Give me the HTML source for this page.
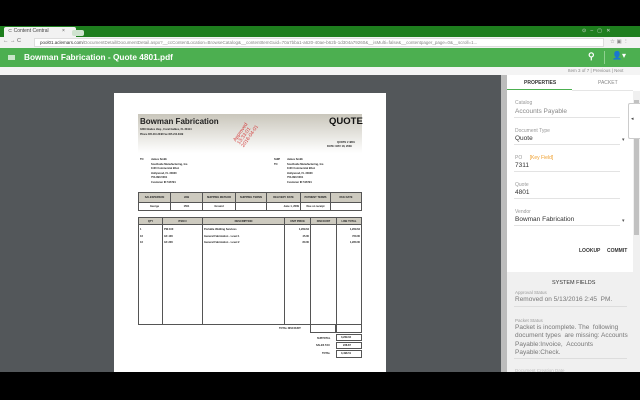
<!DOCTYPE html>
<html><head><meta charset="utf-8"><style>
*{margin:0;padding:0;box-sizing:border-box}
body{width:640px;height:400px;background:#000;position:relative;overflow:hidden;font-family:"Liberation Sans",sans-serif}
.a{position:absolute}
.t{position:absolute;white-space:nowrap}
.doc{font-size:3px;color:#222;font-weight:bold}
table{border-collapse:collapse;position:absolute}
td{border:0.6px solid #555;font-size:2.6px;font-weight:bold;text-align:center;padding:0 1px;color:#222}
.lbl{font-size:5px;color:#999}
.val{font-size:6.5px;color:#333}
.ln{height:1px;background:#e3e3e3;width:106px;left:514px}
</style></head><body>
<!-- chrome tabs -->
<div class="a" style="left:0;top:26px;width:640px;height:11px;background:#1e7e1e"></div>
<div class="a" style="left:4px;top:27px;width:72px;height:10px;background:#f2f2f2;border-radius:2px 2px 0 0"></div>
<div class="t" style="left:8px;top:28px;font-size:5px;color:#444">⊂ Content Central</div>
<div class="t" style="left:62px;top:28px;font-size:5px;color:#555">×</div>
<div class="a" style="left:72px;top:30px;width:12px;height:6px;background:#cfe3cf;border-radius:2px"></div>
<div class="t" style="left:582px;top:28px;font-size:5px;color:#ddd">⊙ &nbsp; – &nbsp; ▢ &nbsp; ✕</div>
<!-- address -->
<div class="a" style="left:0;top:37px;width:640px;height:11px;background:#f2f2f2"></div>
<div class="t" style="left:3px;top:38px;font-size:5.5px;color:#666">← → C</div>
<div class="a" style="left:34px;top:38px;width:570px;height:9px;background:#fff;border:1px solid #ddd"></div>
<div class="t" style="left:40px;top:39.5px;font-size:4.5px;color:#888"><span style="color:#333">pool01.aclemars.com</span>/DocumentDetail/DocumentDetail.aspx?__ccContentLocation=BrowseCatalog&amp;__contentItemGuid=70a7bba1-a620-40ae-b62b-1d304a79260&amp;__isMulti=false&amp;__contentpager_page=0&amp;__scroll=1...</div>
<div class="t" style="left:610px;top:38.5px;font-size:5.5px;color:#888">☆ ▣ ⋮</div>
<!-- app header -->
<div class="a" style="left:0;top:48px;width:640px;height:19px;background:#4caf50"></div>
<div class="a" style="left:8px;top:55px;width:7px;height:5px;background:#c8e6c9"></div>
<div class="t" style="left:24px;top:52px;font-size:8.3px;font-weight:bold;color:#fff">Bowman Fabrication - Quote 4801.pdf</div>
<div class="t" style="left:588px;top:51px;font-size:9px;color:#fff;font-weight:bold">⚲</div>
<div class="a" style="left:604px;top:51px;width:1px;height:13px;background:#8fd18f"></div>
<div class="t" style="left:612px;top:51px;font-size:8px;color:#fff">👤▾</div>
<!-- sub bar -->
<div class="a" style="left:0;top:67px;width:640px;height:8px;background:#f4f4f4"></div>
<div class="t" style="left:568px;top:67.5px;font-size:4.5px;color:#888">Item 3 of 7 | Previous | Next</div>
<!-- viewer -->
<div class="a" style="left:0;top:75px;width:501px;height:297px;background:#53575a"></div>
<div class="a" style="left:114px;top:93px;width:272px;height:279px;background:#fff"></div>
<!-- doc header -->
<div class="a" style="left:138px;top:114px;width:224px;height:39px;background:linear-gradient(#c9c6bb,#fff)"></div>
<div class="t" style="left:140px;top:117px;font-size:8px;font-weight:bold;color:#222">Bowman Fabrication</div>
<div class="t doc" style="left:140px;top:128px;font-size:2.6px">3330 Glades Hwy., Coral Gables, FL 33114</div>
<div class="t doc" style="left:140px;top:133px;font-size:2.4px">Phone 305-210-3348 Fax 305-210-3349</div>
<div class="t" style="left:329px;top:116px;font-size:9.5px;font-weight:bold;color:#111">QUOTE</div>
<div class="t doc" style="left:337px;top:141px;font-size:2.6px">QUOTE # 4801</div>
<div class="t doc" style="left:327px;top:145px;font-size:2.6px">DATE: MAY 18, 2009</div>
<div class="t" style="left:233px;font-size:5px;color:#d43a3a;transform:rotate(-55deg);transform-origin:left top;line-height:5px;top:140px">Approved<br>13:33:01<br>2016-04-01</div>
<div class="t doc" style="left:140px;top:158px;font-size:2.6px;line-height:4.6px;font-weight:bold">TO</div>
<div class="t doc" style="left:151px;top:158px;font-size:2.6px;line-height:4.6px">James Smith<br>Southside Manufacturing, Inc.<br>1100 Commercial Blvd.<br>Hollywood, FL 33020<br>754-890-5001<br>Customer ID 516791</div>
<div class="t doc" style="left:274px;top:158px;font-size:2.6px;line-height:4.6px">SHIP<br>TO</div>
<div class="t doc" style="left:287px;top:158px;font-size:2.6px;line-height:4.6px">James Smith<br>Southside Manufacturing, Inc.<br>1100 Commercial Blvd.<br>Hollywood, FL 33020<br>754-890-5001<br>Customer ID 516791</div>
<table style="left:138px;top:192px;width:224px;height:19px">
<tr style="background:#cdcabf;height:10px"><td style="width:32px">SALESPERSON</td><td style="width:32px">JOB</td><td style="width:33px">SHIPPING METHOD</td><td style="width:31px">SHIPPING TERMS</td><td style="width:34px">DELIVERY DATE</td><td style="width:30px">PAYMENT TERMS</td><td>DUE DATE</td></tr>
<tr><td>George</td><td>1501</td><td>Ground</td><td></td><td style="text-align:right">June 1, 2009</td><td>Due on receipt</td><td></td></tr>
</table>
<table style="left:138px;top:217px;width:224px;height:108px">
<tr style="background:#cdcabf;height:7px"><td style="width:24px">QTY</td><td style="width:40px">ITEM #</td><td style="width:82px">DESCRIPTION</td><td style="width:26px">UNIT PRICE</td><td style="width:26px">DISCOUNT</td><td>LINE TOTAL</td></tr>
<tr><td style="text-align:left;vertical-align:top;line-height:6.5px;padding-top:2px">1<br>16<br>16</td><td style="text-align:left;vertical-align:top;line-height:6.5px;padding-top:2px">PW-100<br>GF-100<br>GF-200</td><td style="text-align:left;vertical-align:top;line-height:6.5px;padding-top:2px">Portable Welding Services<br>General Fabrication - Level 1<br>General Fabrication - Level 2</td><td style="text-align:right;vertical-align:top;line-height:6.5px;padding-top:2px">1,269.64<br>45.00<br>80.00</td><td></td><td style="text-align:right;vertical-align:top;line-height:6.5px;padding-top:2px">1,269.64<br>720.00<br>1,280.00</td></tr>
</table>
<div class="t doc" style="left:279px;top:327px;font-size:2.5px">TOTAL DISCOUNT</div>
<div class="a" style="left:310px;top:325px;width:26px;height:8px;border:0.6px solid #555;border-top:none"></div>
<div class="a" style="left:336px;top:325px;width:26px;height:8px;border:0.6px solid #555;border-top:none"></div>
<div class="t doc" style="left:317px;top:337px;font-size:2.5px">SUBTOTAL</div>
<div class="a" style="left:336px;top:334px;width:26px;height:7px;border:0.6px solid #555"></div>
<div class="t doc" style="left:341px;top:336px;font-size:2.6px">3,269.64</div>
<div class="t doc" style="left:316px;top:344px;font-size:2.5px">SALES TAX</div>
<div class="a" style="left:336px;top:342px;width:26px;height:7px;border:0.6px solid #555"></div>
<div class="t doc" style="left:343px;top:344px;font-size:2.6px">228.87</div>
<div class="t doc" style="left:322px;top:352px;font-size:2.5px">TOTAL</div>
<div class="a" style="left:336px;top:350px;width:26px;height:8px;border:0.6px solid #555"></div>
<div class="t doc" style="left:341px;top:352px;font-size:2.6px">3,498.51</div>
<!-- right panel -->
<div class="a" style="left:501px;top:75px;width:6px;height:297px;background:#bcbcbc"></div>
<div class="a" style="left:507px;top:75px;width:133px;height:297px;background:#fff"></div>
<div class="a" style="left:633px;top:91px;width:7px;height:281px;background:#f0f0f0"></div>
<div class="a" style="left:634px;top:100px;width:5px;height:135px;background:#c1c1c1"></div>
<div class="t" style="left:524px;top:80px;font-size:5px;font-weight:bold;color:#333">PROPERTIES</div>
<div class="t" style="left:598px;top:80px;font-size:5px;color:#888">PACKET</div>
<div class="a" style="left:507px;top:89px;width:65px;height:1px;background:#4caf50"></div>
<div class="a" style="left:572px;top:89.5px;width:61px;height:0.5px;background:#e5e5e5"></div>
<div class="t lbl" style="left:515px;top:100px">Catalog</div>
<div class="t val" style="left:515px;top:108px;color:#888">Accounts Payable</div>
<div class="ln a" style="top:117px"></div>
<div class="t lbl" style="left:515px;top:128px">Document Type</div>
<div class="t val" style="left:515px;top:135px">Quote</div>
<div class="t" style="left:622px;top:137px;font-size:5px;color:#555">▾</div>
<div class="ln a" style="top:144px"></div>
<div class="t lbl" style="left:515px;top:155px">PO <span style="color:#f0a030;margin-left:6px">[Key Field]</span></div>
<div class="t val" style="left:515px;top:162px">7311</div>
<div class="ln a" style="top:171px"></div>
<div class="t lbl" style="left:515px;top:182px">Quote</div>
<div class="t val" style="left:515px;top:189px">4801</div>
<div class="ln a" style="top:198px"></div>
<div class="t lbl" style="left:515px;top:209px">Vendor</div>
<div class="t val" style="left:515px;top:216px">Bowman Fabrication</div>
<div class="t" style="left:622px;top:218px;font-size:5px;color:#555">▾</div>
<div class="ln a" style="top:225px"></div>
<div class="t" style="left:579px;top:248px;font-size:5px;font-weight:bold;color:#333">LOOKUP</div>
<div class="t" style="left:607px;top:248px;font-size:5px;font-weight:bold;color:#333">COMMIT</div>
<div class="a" style="left:507px;top:272px;width:126px;height:100px;background:#f0f0f0"></div>
<div class="t" style="left:552px;top:280px;font-size:5.5px;color:#333">SYSTEM FIELDS</div>
<div class="t lbl" style="left:515px;top:290px;font-size:4.5px">Approval Status</div>
<div class="t" style="left:515px;top:296px;font-size:6.5px;color:#777">Removed on 5/13/2016 2:45 &nbsp;PM.</div>
<div class="a" style="left:514px;top:306px;width:113px;height:1px;background:#ddd"></div>
<div class="t lbl" style="left:515px;top:318px;font-size:4.5px">Packet Status</div>
<div class="t" style="left:515px;top:324px;font-size:6.5px;color:#777;line-height:8.3px">Packet is incomplete. The &nbsp;following<br>document types &nbsp;are missing: Accounts<br>Payable:Invoice, &nbsp;Accounts<br>Payable:Check.</div>
<div class="a" style="left:514px;top:358px;width:113px;height:1px;background:#ddd"></div>
<div class="t lbl" style="left:515px;top:368px;font-size:4.5px;color:#bbb">Document Creation Date</div>
<!-- collapse tab -->
<div class="a" style="left:628px;top:103px;width:12px;height:36px;background:#fff;border:1px solid #ccc;border-right:none;border-radius:2px 0 0 2px"></div>
<div class="t" style="left:631px;top:116px;font-size:5px;color:#444">◂</div>
<div class="a" style="left:0;top:372px;width:640px;height:28px;background:#000"></div>
</body></html>
